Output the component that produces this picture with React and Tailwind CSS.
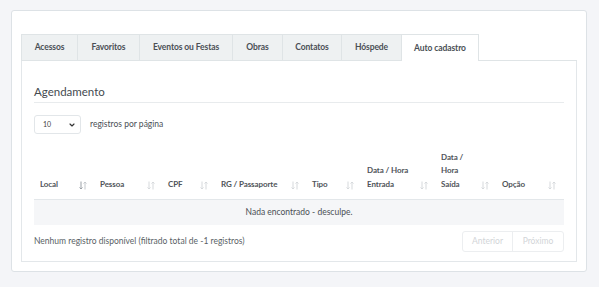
import { ChevronDown } from "lucide-react";

const tabs = [
  { label: "Acessos", w: "w-[56px]" },
  { label: "Favoritos", w: "w-[62px]" },
  { label: "Eventos ou Festas", w: "w-[93px]" },
  { label: "Obras", w: "w-[50px]" },
  { label: "Contatos", w: "w-[59px]" },
  { label: "Hóspede", w: "w-[60px]" },
];

const cols = [
  { label: "Local", w: "w-[60px]", active: true },
  { label: "Pessoa", w: "w-[68px]" },
  { label: "CPF", w: "w-[53px]" },
  { label: "RG / Passaporte", w: "w-[91px]" },
  { label: "Tipo", w: "w-[55px]" },
  { label: "Data / Hora Entrada", w: "w-[74px]", wrap: "max-w-[48px]" },
  { label: "Data / Hora Saída", w: "w-[61px]", wrap: "max-w-[28px]" },
  { label: "Opção", w: "w-[67px]" },
];

function SortIcon({ active }) {
  return (
    <svg width="8" height="9" viewBox="0 0 8 9" className="shrink-0">
      <g strokeWidth="1" fill="none">
        <path d="M2 0.5v7.5M0.5 6.5l1.5 1.5 1.5-1.5" stroke={active ? "#9aa0a6" : "#d6d9dc"} />
        <path d="M6 8.5v-7.5M4.5 2.5l1.5-1.5 1.5 1.5" stroke={active ? "#c4c8cc" : "#d6d9dc"} />
      </g>
    </svg>
  );
}

function App() {
  return (
    <div className="w-[599px] h-[287px] bg-[#f4f5f8] pt-[10px] pl-[11px] font-['Lato',sans-serif]">
      <div className="w-[576px] h-[262px] bg-white border border-[#dde2e6] rounded-[3px] px-[9px] pt-[23px]">
        {/* TABS */}
        <div className="flex h-[27px]">
          {tabs.map((t) => (
            <div
              key={t.label}
              className={`${t.w} flex items-center justify-center bg-[#eef1f2] border-t border-l border-b border-[#dfe4e6] text-[8.5px] font-bold tracking-[-0.1px] text-[#4a4f55]`}
            >
              {t.label}
            </div>
          ))}
          <div className="w-[78px] flex items-center justify-center bg-white border-t border-x border-[#dfe4e6] text-[8.5px] font-bold tracking-[-0.1px] text-[#4a4f55]">
            Auto cadastro
          </div>
          <div className="flex-1 border-b border-[#dfe4e6]"></div>
        </div>

        {/* PANEL */}
        <div className="h-[201px] border-x border-b border-[#e3e7ea] px-[12px] pt-[23px]">
          <h2 className="text-[11.5px] text-[#444a50] leading-[15px] pb-[3px] border-b border-[#e8ebed]">
            Agendamento
          </h2>

          <div className="flex items-center gap-[9px] mt-[12px]">
            <div className="w-[47px] h-[19px] border border-[#e2e6e9] rounded-[3px] flex items-center justify-between pl-[8px] pr-[4px]">
              <span className="text-[7px] text-[#444]">10</span>
              <ChevronDown size={8} strokeWidth={3.5} className="text-[#333]" />
            </div>
            <span className="text-[8.5px] text-[#4a4f55]">registros por página</span>
          </div>

          {/* TABLE */}
          <div>
            <div className="flex items-end border-b border-[#e3e7ea] pb-[8px] h-[66px]">
              {cols.map((c) => (
                <div key={c.label} className={`${c.w} flex items-end justify-between pl-[6px] pr-[7px]`}>
                  <span className={`text-[8px] font-bold tracking-[-0.1px] text-[#505459] leading-[13.5px] ${c.wrap || ""}`}>
                    {c.label}
                  </span>
                  <div className="pb-[1px]">
                    <SortIcon active={c.active} />
                  </div>
                </div>
              ))}
            </div>
            <div className="h-[25px] bg-[#f5f6f8] flex items-center justify-center text-[8.5px] text-[#4a4f55]">
              Nada encontrado - desculpe.
            </div>
          </div>

          <div className="flex items-center justify-between mt-[6px]">
            <span className="text-[8.5px] text-[#5a5f66]">
              Nenhum registro disponível (filtrado total de -1 registros)
            </span>
            <div className="flex h-[21px] border border-[#eceef0] rounded-[3px] text-[8.5px] text-[#d2d5d8]">
              <div className="w-[50px] flex items-center justify-center border-r border-[#eceef0]">Anterior</div>
              <div className="w-[50px] flex items-center justify-center">Próximo</div>
            </div>
          </div>
        </div>
      </div>
    </div>
  );
}

export default App;
